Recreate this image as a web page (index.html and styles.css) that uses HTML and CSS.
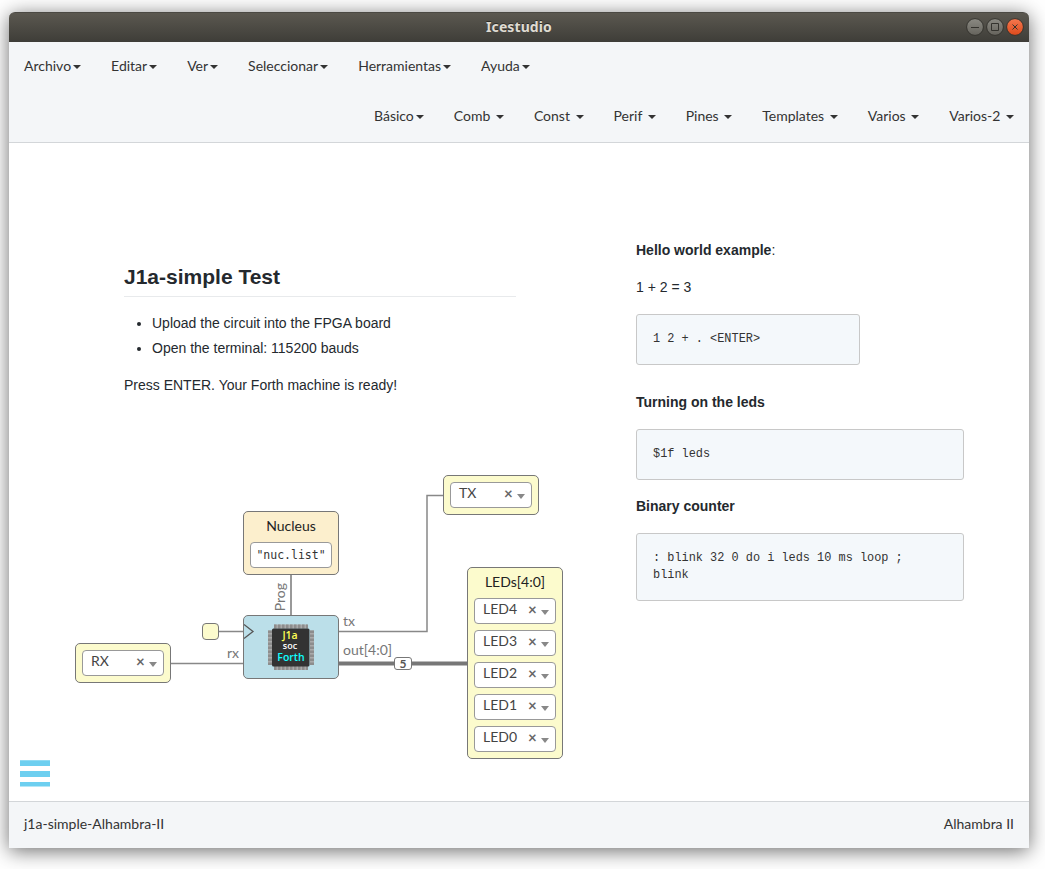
FILE: index.html
```
<!DOCTYPE html>
<html lang="es">
<head>
<meta charset="utf-8">
<title>Icestudio</title>
<link rel="stylesheet" href="styles.css">
</head>
<body>
<div class="window">
  <header class="titlebar">
    <span class="title">Icestudio</span>
    <svg class="controls" width="60" height="20" viewBox="0 0 60 20">
      <defs>
        <linearGradient id="grey" x1="0" y1="0" x2="0" y2="1"><stop offset="0" stop-color="#8b8a83"/><stop offset="1" stop-color="#65635c"/></linearGradient>
        <linearGradient id="red" x1="0" y1="0" x2="0" y2="1"><stop offset="0" stop-color="#f5784f"/><stop offset="1" stop-color="#dd4a1b"/></linearGradient>
      </defs>
      <g stroke="#34332e" stroke-width="1">
        <circle cx="10" cy="10" r="8.4" fill="url(#grey)"/>
        <circle cx="30" cy="10" r="8.4" fill="url(#grey)"/>
        <circle cx="50" cy="10" r="8.4" fill="url(#red)"/>
        <path d="M6 10.500h8M26.500 6.500h7v7h-7zM47.500 7.500l5 5M52.500 7.500l-5 5" fill="none"/>
      </g>
    </svg>
  </header>
  <nav class="menus">
    <ul class="menu">
      <li>Archivo<i class="caret"></i></li><li>Editar<i class="caret"></i></li><li>Ver<i class="caret"></i></li><li>Seleccionar<i class="caret"></i></li><li>Herramientas<i class="caret"></i></li><li>Ayuda<i class="caret"></i></li>
    </ul>
    <ul class="menu menu-right">
      <li>Básico<i class="caret"></i></li><li>Comb <i class="caret"></i></li><li>Const <i class="caret"></i></li><li>Perif <i class="caret"></i></li><li>Pines <i class="caret"></i></li><li>Templates <i class="caret"></i></li><li>Varios <i class="caret"></i></li><li>Varios-2 <i class="caret"></i></li>
    </ul>
  </nav>
  <main class="canvas">
    <svg class="wires" width="1020" height="658" viewBox="0 0 1020 658">
      <g fill="none" stroke="#888" stroke-width="1.5">
        <path d="M162 520.500H235M209 488.500H235M329 488.500H418V352.500H435"/>
        <path d="M282 431V473" stroke="#999" stroke-width="2"/>
        <path d="M329 520.500H459" stroke="#777" stroke-width="4"/>
      </g>
    </svg>

    <article class="note note-intro">
      <h2>J1a-simple Test</h2>
      <ul>
        <li>Upload the circuit into the FPGA board</li>
        <li>Open the terminal: 115200 bauds</li>
      </ul>
      <p>Press ENTER. Your Forth machine is ready!</p>
    </article>
    <article class="note note-hello">
      <p><b>Hello world example</b>:</p>
      <p>1 + 2 = 3</p>
      <pre>1 2 + . &lt;ENTER&gt;</pre>
    </article>
    <article class="note note-leds">
      <p><b>Turning on the leds</b></p>
      <pre>$1f leds</pre>
      <p><b>Binary counter</b></p>
      <pre>: blink 32 0 do i leds 10 ms loop ;
blink</pre>
    </article>

    <div class="block constant"><span class="block-name">Nucleus</span><span class="value">"nuc.list"</span></div>
    <div class="block port rx"><span class="select">RX<b>×</b><i></i></span></div>
    <div class="block port tx"><span class="select">TX<b>×</b><i></i></span></div>
    <div class="block port leds">
      <span class="block-name">LEDs[4:0]</span>
      <span class="select">LED4<b>×</b><i></i></span>
      <span class="select">LED3<b>×</b><i></i></span>
      <span class="select">LED2<b>×</b><i></i></span>
      <span class="select">LED1<b>×</b><i></i></span>
      <span class="select">LED0<b>×</b><i></i></span>
    </div>
    <div class="block clock"></div>
    <div class="block soc">
      <svg width="94" height="62" viewBox="0 0 94 62">
        <path d="M0 8.500L9 15.500L0 22.500" fill="none" stroke="#555" stroke-width="1.3"/>
        <path d="M30 10.500H63.500M30 52H63.500M26 14.500V49M68 14.500V49" fill="none" stroke="#aaa" stroke-width="4"/>
        <path d="M30 10.500H64M30 52H64M26 14.500V49M68 14.500V49" fill="none" stroke="#8d8d8d" stroke-width="4" stroke-dasharray="2.500 1.500"/>
        <rect x="28" y="12.500" width="37.500" height="38" rx="1.500" fill="#333"/>
        <g class="chip-text" text-anchor="middle">
          <text x="46" y="23" fill="#ff5">J1a</text>
          <text x="46" y="32.700" fill="#fff" class="chip-small">soc</text>
          <text x="47" y="45" fill="#1ff">Forth</text>
        </g>
      </svg>
    </div>
    <span class="label l-prog">Prog</span>
    <span class="label l-rx">rx</span>
    <span class="label l-tx">tx</span>
    <span class="label l-out">out[4:0]</span>
    <span class="bus">5</span>
    <svg class="burger" width="30" height="27" viewBox="0 0 30 27" fill="#6dcff0"><path d="M0 .3h30v5.700H0zM0 11h30v6H0zM0 22h30v4.500H0z"/></svg>
  </main>
  <footer class="status"><span>j1a-simple-Alhambra-II</span><span>Alhambra II</span></footer>
</div>
</body>
</html>
```
FILE: styles.css
```
* { box-sizing: border-box; }
body { margin: 0; padding: 12px 0 0 9px; height: 869px; background: #fff; font-family: Lato, sans-serif; font-size: 14px; color: #333; overflow: hidden; }
.window { width: 1020px; height: 836px; display: flex; flex-direction: column; border-radius: 6px 6px 0 0; background: #fff; box-shadow: 0 3px 20px rgba(0,0,0,.58); }
.titlebar { height: 30px; display: grid; grid-template-columns: 64px 1fr 64px; align-items: start; padding-top: 4px; border-radius: 6px 6px 0 0; background: linear-gradient(#5b5850, #3e3d38); border-top: 1px solid #4b4943; }
.title { grid-column: 2; text-align: center; font: bold 14px/20px "Noto Sans", sans-serif; letter-spacing: .1px; color: #dfdbd2; text-shadow: 0 -1px #2b2a26; }
.controls { display: block; }
.menus { height: 101px; background: #f4f6f8; border-bottom: 1px solid #d3d6d9; }
.menu { list-style: none; margin: 0; padding: 0; display: flex; height: 50px; }
.menu-right { justify-content: flex-end; }
.menu li { padding: 14px 15px 16px; line-height: 20px; white-space: pre; }
.caret { display: inline-block; margin-left: 2px; vertical-align: middle; border-top: 4px solid #333; border-left: 4px solid transparent; border-right: 4px solid transparent; }
.canvas { position: relative; flex: 1; overflow: hidden; }
.wires { position: absolute; left: 0; top: 0; }
.note { position: absolute; font: 14px/25px "Liberation Sans", Arial, sans-serif; color: #24292e; }
.note p { margin: 0 0 12px; }
.note h2 { margin: 0 0 14px; padding-bottom: 6px; font-size: 21px; line-height: 26px; border-bottom: 1px solid #e8eaec; }
.note ul { margin: 0 0 12px; padding-left: 28px; }
.note pre { margin: 0 0 14px; padding: 16px; height: 51px; font: 11.900px/17px "Liberation Mono", monospace; color: #333; background: #f4f8fb; border: 1px solid #c8c8c8; border-radius: 3px; }
.note-intro { left: 115px; top: 121px; width: 392px; }
.note-hello { left: 627px; top: 95px; width: 224px; }
.note-hello pre { margin-top: 14px; }
.note-leds { left: 627px; top: 247px; width: 328px; }
.note-leds p { margin-bottom: 14px; }
.note-leds pre:last-child { height: 68px; }
.block { position: absolute; display: flex; flex-direction: column; gap: 6px; padding: 6px; border: 1px solid #777; border-radius: 5px; width: 96px; background: #fcfbcd; }
.block-name { height: 18px; line-height: 16px; text-align: center; color: #222; }
.value, .select { height: 26px; border: 1px solid #999; border-radius: 4px; background: #fff; }
.value { font: 11.500px/25px "DejaVu Sans Mono", monospace; text-align: center; }
.select { display: grid; grid-template-columns: 1fr 13px 10px; padding: 0 4px 0 8px; line-height: 20px; color: #444; }
.select b { font-size: 15px; color: #666; }
.select i { margin-top: 11px; width: 0; height: 5px; border-top: 5px solid #888; border-left: 4px solid transparent; border-right: 4px solid transparent; }
.constant { left: 234px; top: 368px; height: 64px; background: #fcefcd; }
.rx { left: 66px; top: 500px; height: 40px; }
.tx { left: 434px; top: 332px; height: 40px; }
.leds { left: 458px; top: 424px; height: 192px; }
.clock { left: 193px; top: 480px; width: 17px; height: 17px; padding: 0; border-radius: 4px; }
.soc { left: 234px; top: 472px; height: 64px; padding: 0; background: #bbdfe9; }
.chip-text { font: 600 10.500px "Open Sans", sans-serif; }
.chip-small { font-size: 9px; }
.label { position: absolute; color: #777; line-height: 16px; }
.l-prog { left: 263px; top: 440px; writing-mode: vertical-rl; transform: rotate(180deg); }
.l-rx { left: 218px; top: 502px; }
.l-tx { left: 334px; top: 470px; }
.l-out { left: 334px; top: 499px; }
.bus { position: absolute; left: 385px; top: 514px; width: 18px; height: 13px; border: 1px solid #777; border-radius: 3px; background: #fff; text-align: center; font-weight: bold; font-size: 12px; line-height: 12px; color: #555; }
.burger { position: absolute; left: 11px; top: 617px; }
.status { height: 47px; display: flex; justify-content: space-between; padding: 0 15px; line-height: 44px; background: #f4f6f8; border-top: 1px solid #d3d6d9; }
```
